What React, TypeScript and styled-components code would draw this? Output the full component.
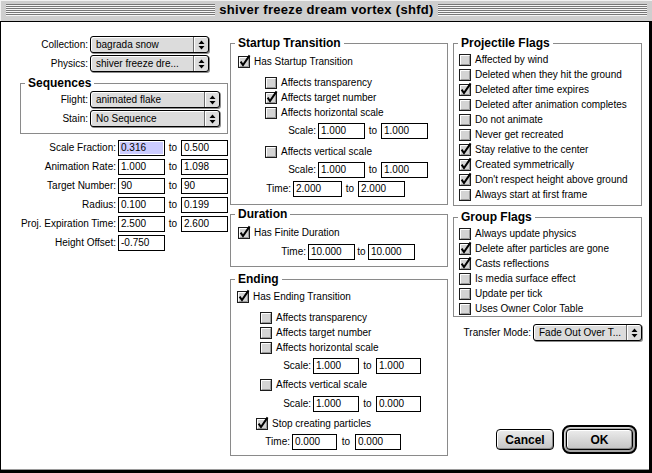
import React from 'react';
import styled, { createGlobalStyle } from 'styled-components';

const GlobalStyle = createGlobalStyle`
  * { box-sizing: border-box; }
  html, body { margin: 0; padding: 0; background: #fff; }
  body {
    font-family: "Liberation Sans", Arial, sans-serif;
    font-size: 10px;
    line-height: 1;
    color: #000;
  }
  #root { width: 652px; height: 473px; overflow: hidden; }
`;

const Window = styled.div`
  width: 652px;
  height: 473px;
  display: flex;
  flex-direction: column;
  background: #fff;
`;

const TitleBar = styled.div`
  flex: none;
  height: 22px;
  display: flex;
  align-items: center;
  padding: 0 5px 1px 6px;
  background: #cecece;
  border-bottom: 1px solid #000;
  box-shadow: inset 1px 1px 0 #f2f2f2;
`;

const Stripes = styled.div`
  flex: 1;
  height: 12px;
  display: flex;
  justify-content: center;
  align-items: center;
  background: repeating-linear-gradient(to bottom, #777 0 1px, #f6f6f6 1px 2px);
`;

const Title = styled.div`
  height: 16px;
  padding: 0 4px;
  background: #cecece;
  font: bold 13px/16px "Liberation Sans", Arial, sans-serif;
  letter-spacing: 0.3px;
  white-space: nowrap;
`;

const Body = styled.div`
  flex: 1;
  display: flex;
  border-left: 1px solid #000;
  border-right: 3px solid #000;
  border-bottom: 3px solid #000;
  box-shadow: inset 0 -1px 0 #9a9a9a;
`;

const Column = styled.div<{ $w: number; $ml?: number }>`
  flex: none;
  width: ${p => p.$w}px;
  margin-left: ${p => p.$ml ?? 0}px;
  padding-top: 14px;
  display: flex;
  flex-direction: column;
`;

const Group = styled.fieldset<{ $mt?: number; $ml?: number; $w?: number }>`
  margin: ${p => p.$mt ?? 0}px 0 0 ${p => p.$ml ?? 0}px;
  padding: 0;
  min-width: 0;
  width: ${p => (p.$w ? `${p.$w}px` : 'auto')};
  border: 1px solid #8a8a8a;
`;

const GroupTitle = styled.legend`
  margin-left: 4px;
  padding: 0 3px;
  font: bold 12px/14px "Liberation Sans", Arial, sans-serif;
  white-space: nowrap;
`;

const GroupBody = styled.div<{ $pl: number; $pb: number }>`
  display: flex;
  flex-direction: column;
  padding: 0 4px ${p => p.$pb}px ${p => p.$pl}px;
`;

const List = styled.div<{ $mt?: number; $indent?: number }>`
  display: flex;
  flex-direction: column;
  margin: ${p => p.$mt ?? 0}px 0 0 ${p => p.$indent ?? 0}px;
`;

const Row = styled.div<{ $mt?: number; $ml?: number; $h?: number }>`
  display: flex;
  align-items: center;
  height: ${p => p.$h ?? 16}px;
  margin: ${p => p.$mt ?? 0}px 0 0 ${p => p.$ml ?? 0}px;
  white-space: nowrap;
`;

const Label = styled.span<{ $w: number }>`
  flex: none;
  width: ${p => p.$w}px;
  padding-right: 2px;
  text-align: right;
  white-space: nowrap;
`;

const Field = styled.div<{ $w?: number; $sel?: boolean }>`
  flex: none;
  width: ${p => p.$w ?? 47}px;
  height: 16px;
  padding: 0 2px;
  border: 1px solid #000;
  line-height: 14px;
  background: ${p => (p.$sel ? '#ccccff' : '#fff')};
  box-shadow: ${p => (p.$sel ? 'inset 0 0 0 1px #fff' : 'none')};
`;

const To = styled.span<{ $w?: number }>`
  flex: none;
  width: ${p => p.$w ?? 16}px;
  text-align: center;
`;

const PopupBox = styled.div<{ $w: number }>`
  flex: none;
  width: ${p => p.$w}px;
  height: 17px;
  display: flex;
  align-items: center;
  border: 1px solid #000;
  border-radius: 3px;
  background: #dcdcdc;
  box-shadow: inset 1px 1px 0 #fff, 1px 1px 0 #8c8c8c;
`;

const PopupText = styled.span`
  flex: 1;
  padding-left: 5px;
  overflow: hidden;
  white-space: nowrap;
`;

const PopupArrows = styled.span`
  flex: none;
  width: 15px;
  align-self: stretch;
  display: flex;
  align-items: center;
  justify-content: center;
  border-left: 1px solid #6a6a6a;
  box-shadow: inset 1px 0 0 #fff;
`;

const BoxSvg = styled.svg`
  flex: none;
  overflow: visible;
`;

const CheckRow = styled.div<{ $h?: number; $mt?: number; $indent?: number }>`
  display: flex;
  align-items: center;
  gap: 4px;
  height: ${p => p.$h ?? 15}px;
  margin: ${p => p.$mt ?? 0}px 0 0 ${p => p.$indent ?? 0}px;
  white-space: nowrap;
`;

const Buttons = styled.div`
  margin-top: auto;
  padding: 0 5px 16px 0;
  display: flex;
  justify-content: flex-end;
  align-items: center;
  gap: 8px;
`;

const Button = styled.div<{ $w: number }>`
  width: ${p => p.$w}px;
  height: 21px;
  display: flex;
  align-items: center;
  justify-content: center;
  border: 1px solid #000;
  border-radius: 4px;
  background: linear-gradient(#ececec, #c4c4c4);
  box-shadow: inset 1px 1px 0 #fff, inset -1px -1px 0 #8a8a8a;
  font: bold 12px "Liberation Sans", Arial, sans-serif;
`;

const DefaultRing = styled.div`
  padding: 2px;
  border: 2px solid #000;
  border-radius: 8px;
  background: #a6a6a6;
  box-shadow: inset 1px 1px 0 #d8d8d8;
`;

function CheckBox({ on }: { on?: boolean }) {
  return (
    <BoxSvg width="12" height="12" viewBox="0 0 12 12">
      <rect x="0.5" y="0.5" width="11" height="11" fill="#d4d4d4" stroke="#1c1c1c" />
      <path d="M1.5 10V1.5H10" stroke="#fff" fill="none" />
      <path d="M2 10.5H10.5V2" stroke="#9a9a9a" fill="none" />
      {on && (
        <path d="M2.6 5.6L5 9L11.6 -0.6" stroke="#000" strokeWidth="2" fill="none" />
      )}
    </BoxSvg>
  );
}

function Check(props: { label: string; on?: boolean; h?: number; mt?: number; indent?: number }) {
  return (
    <CheckRow $h={props.h} $mt={props.mt} $indent={props.indent}>
      <CheckBox on={props.on} />
      <span>{props.label}</span>
    </CheckRow>
  );
}

function Popup({ label, value, lw, w, mt, ml }: { label: string; value: string; lw: number; w: number; mt?: number; ml?: number }) {
  return (
    <Row $h={17} $mt={mt} $ml={ml}>
      <Label $w={lw}>{label}</Label>
      <PopupBox $w={w}>
        <PopupText>{value}</PopupText>
        <PopupArrows>
          <svg width="7" height="10" viewBox="0 0 7 10">
            <path d="M3.5 0.5L6.5 4H0.5Z M0.5 6H6.5L3.5 9.5Z" fill="#000" />
          </svg>
        </PopupArrows>
      </PopupBox>
    </Row>
  );
}

type RangeProps = {
  label: string;
  lw: number;
  a: string;
  b?: string;
  aw?: number;
  bw?: number;
  tw?: number;
  mt?: number;
  sel?: boolean;
};

function Range({ label, lw, a, b, aw, bw, tw, mt, sel }: RangeProps) {
  return (
    <Row $mt={mt}>
      <Label $w={lw}>{label}</Label>
      <Field $w={aw} $sel={sel}>{a}</Field>
      {b !== undefined && (
        <>
          <To $w={tw}>to</To>
          <Field $w={bw}>{b}</Field>
        </>
      )}
    </Row>
  );
}

const projectileFlags: [string, boolean][] = [
  ['Affected by wind', false],
  ['Deleted when they hit the ground', false],
  ['Deleted after time expires', true],
  ['Deleted after animation completes', false],
  ['Do not animate', false],
  ['Never get recreated', false],
  ['Stay relative to the center', true],
  ['Created symmetrically', true],
  ["Don't respect height above ground", true],
  ['Always start at first frame', false],
];

const groupFlags: [string, boolean][] = [
  ['Always update physics', false],
  ['Delete after particles are gone', true],
  ['Casts reflections', true],
  ['Is media surface effect', false],
  ['Update per tick', false],
  ['Uses Owner Color Table', false],
];

const ranges: { label: string; a: string; b?: string; sel?: boolean }[] = [
  { label: 'Scale Fraction:', a: '0.316', b: '0.500', sel: true },
  { label: 'Animation Rate:', a: '1.000', b: '1.098' },
  { label: 'Target Number:', a: '90', b: '90' },
  { label: 'Radius:', a: '0.100', b: '0.199' },
  { label: 'Proj. Expiration Time:', a: '2.500', b: '2.600' },
  { label: 'Height Offset:', a: '-0.750' },
];

export default function App() {
  return (
    <>
      <GlobalStyle />
      <Window>
        <TitleBar>
          <Stripes>
            <Title>shiver freeze dream vortex (shfd)</Title>
          </Stripes>
        </TitleBar>

        <Body>
          <Column $w={229}>
            <Popup label="Collection:" value="bagrada snow" lw={89} w={119} />
            <Popup label="Physics:" value="shiver freeze dre..." lw={89} w={119} mt={2} />

            <Group $mt={4} $ml={19} $w={208}>
              <GroupTitle>Sequences</GroupTitle>
              <GroupBody $pl={0} $pb={6}>
                <Popup label="Flight:" value="animated flake" lw={69} w={130} mt={1} />
                <Popup label="Stain:" value="No Sequence" lw={69} w={130} mt={2} />
              </GroupBody>
            </Group>

            <List $mt={6}>
              {ranges.map((r, i) => (
                <Range key={r.label} label={r.label} lw={117} a={r.a} b={r.b} sel={r.sel} mt={i ? 3 : 0} />
              ))}
            </List>
          </Column>

          <Column $w={218}>
            <Group>
              <GroupTitle>Startup Transition</GroupTitle>
              <GroupBody $pl={7} $pb={7}>
                <Check label="Has Startup Transition" on h={14} mt={5} />
                <List $mt={6} $indent={27}>
                  <Check label="Affects transparency" />
                  <Check label="Affects target number" on />
                  <Check label="Affects horizontal scale" />
                </List>
                <Range label="Scale:" lw={80} a="1.000" b="1.000" mt={3} />
                <Check label="Affects vertical scale" indent={27} mt={5} />
                <Range label="Scale:" lw={80} a="1.000" b="1.000" mt={3} />
                <Range label="Time:" lw={55} a="2.000" b="2.000" aw={49} mt={3} />
              </GroupBody>
            </Group>

            <Group $mt={2}>
              <GroupTitle>Duration</GroupTitle>
              <GroupBody $pl={7} $pb={6}>
                <Check label="Has Finite Duration" on h={14} mt={5} />
                <Range label="Time:" lw={70} a="10.000" b="10.000" tw={13} mt={4} />
              </GroupBody>
            </Group>

            <Group $mt={5}>
              <GroupTitle>Ending</GroupTitle>
              <GroupBody $pl={6} $pb={5}>
                <Check label="Has Ending Transition" on h={14} mt={4} />
                <List $mt={6} $indent={23}>
                  <Check label="Affects transparency" />
                  <Check label="Affects target number" />
                  <Check label="Affects horizontal scale" />
                </List>
                <Range label="Scale:" lw={76} a="1.000" b="1.000" aw={46} bw={45} tw={17} mt={3} />
                <Check label="Affects vertical scale" indent={23} mt={3} />
                <Range label="Scale:" lw={76} a="1.000" b="0.000" aw={46} bw={45} tw={17} mt={4} />
                <Check label="Stop creating particles" on indent={19} mt={4} />
                <Range label="Time:" lw={55} a="0.000" b="0.000" aw={45} bw={46} tw={18} mt={3} />
              </GroupBody>
            </Group>
          </Column>

          <Column $w={189} $ml={5}>
            <Group>
              <GroupTitle>Projectile Flags</GroupTitle>
              <GroupBody $pl={5} $pb={3}>
                <List $mt={2}>
                  {projectileFlags.map(([label, on]) => (
                    <Check key={label} label={label} on={on} />
                  ))}
                </List>
              </GroupBody>
            </Group>

            <Group $mt={4}>
              <GroupTitle>Group Flags</GroupTitle>
              <GroupBody $pl={5} $pb={0}>
                <List $mt={2}>
                  {groupFlags.map(([label, on]) => (
                    <Check key={label} label={label} on={on} />
                  ))}
                </List>
              </GroupBody>
            </Group>

            <Popup label="Transfer Mode:" value="Fade Out Over T..." lw={78} w={109} mt={7} ml={2} />

            <Buttons>
              <Button $w={58}>Cancel</Button>
              <DefaultRing>
                <Button $w={67}>OK</Button>
              </DefaultRing>
            </Buttons>
          </Column>
        </Body>
      </Window>
    </>
  );
}
